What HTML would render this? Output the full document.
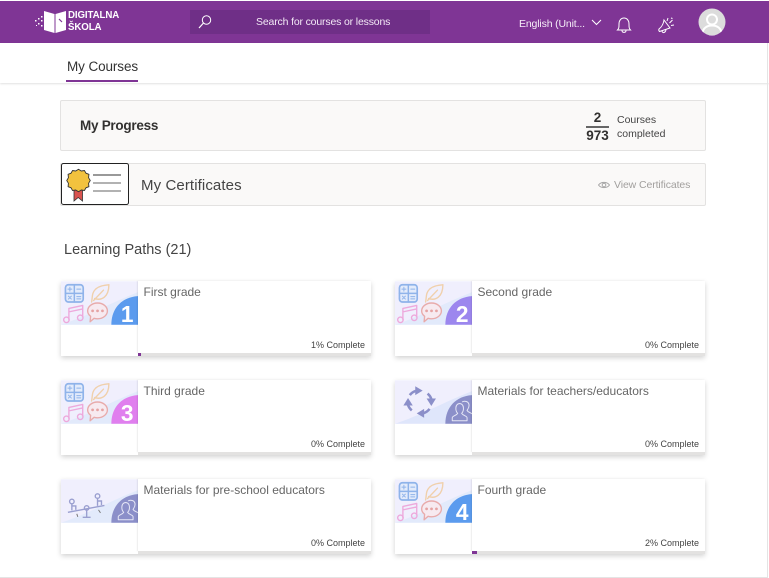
<!DOCTYPE html>
<html><head><meta charset="utf-8"><title>My Courses</title>
<style>
html,body{margin:0;padding:0;background:#fff}
body{position:relative;width:769px;height:578px;overflow:hidden;font-family:"Liberation Sans","DejaVu Sans",sans-serif;color:#333}
.a{position:absolute;white-space:nowrap}
.card{position:absolute;width:310px;height:75px;background:#fff;box-shadow:0 2px 5px rgba(0,0,0,.18)}
.card svg.th{position:absolute;left:0;top:0;width:77px;height:44px}
.r{position:absolute;left:77px;top:0;width:233px;height:72px;background:#fff;box-shadow:-1px 0 1px rgba(0,0,0,.08)}
.bar{position:absolute;left:77px;top:72px;width:233px;height:3px;background:#e3e2e1}
.bar i{position:absolute;left:0;top:0;height:3px;background:#7f3595;display:block}
.t{position:absolute;left:5.500px;top:4px;font-size:12px;color:#666;white-space:nowrap}
.c{position:absolute;right:6px;top:59px;font-size:9px;color:#444;white-space:nowrap}
.panel{position:absolute;left:60px;width:644px;background:#faf9f8;border:1px solid #e3e2e1;border-radius:2px}
.n{font-family:"Liberation Sans",sans-serif;font-weight:bold;font-size:23px;fill:#fff;text-anchor:middle}
</style></head><body>
<svg width="0" height="0" style="position:absolute">
<defs>
<symbol id="subj" viewBox="0 0 78 44">
<g fill="none" stroke-width="1.400" stroke-linecap="round" stroke-linejoin="round">
<rect x="4.500" y="3.500" width="18" height="17.500" rx="3" fill="#e3ebfb" stroke="#8fb3ea" stroke-width="1.700"/>
<path d="M13.500 3.500V21M4.500 12.200H22.500" stroke="#8fb3ea" stroke-width="1.500"/>
<path d="M7 8H11M9 6V10M16 8H20M7.500 15L10.500 18M10.500 15L7.500 18M16 15.500H20M16 17.800H20" stroke="#8fb3ea" stroke-width="1"/>
<path d="M31 21C32 16 31 12 35 8C39 4.500 44 4 48.500 3.500C48.500 8 47.500 13 44 16C41 18.500 37 18.500 34 17.500M33 19.500L43 9" stroke="#f0d0ac"/>
<path d="M8 39V27.500L22 24.500V36M8 31L22 28" stroke="#eda9dc"/>
<ellipse cx="5.500" cy="39" rx="2.800" ry="2.800" stroke="#eda9dc"/>
<ellipse cx="19.500" cy="37" rx="2.800" ry="2.800" stroke="#eda9dc"/>
<path d="M37 22C42.500 22 47 25.500 47 30C47 34.500 42.500 38 37 38C35.500 38 34.500 37.800 33.500 37.500L29.500 41L30 35.500C28 34 27 32.200 27 30C27 25.500 31.500 22 37 22Z" fill="#f7eaf0" stroke="#e8abab"/>
<circle cx="32" cy="30" r="1.400" fill="#e5a3a3" stroke="none"/><circle cx="37" cy="30" r="1.400" fill="#e5a3a3" stroke="none"/><circle cx="42" cy="30" r="1.400" fill="#e5a3a3" stroke="none"/>
</g>
</symbol>
<symbol id="people" viewBox="0 0 78 44">
<g fill="none" stroke="#e6e7f6" stroke-width="1" stroke-linejoin="round">
<path d="M58 41V38C58 36 62 36 63.500 33.500C61 31 60.500 24 65.500 23.500C70.500 24 70 31 67.500 33.500C69 36 73 36 73 38V41Z"/>
<path d="M68 22C70 20.500 75 21 75 25.500C75 28 73.500 29.500 73 30.500C74 32.500 77 33 78 34"/>
</g>
</symbol>
</defs>
</svg>

<!-- header -->
<div class="a" style="left:0;top:1px;width:769px;height:42px;background:#7f3595"></div>
<div class="a" style="left:0;top:43px;width:769px;height:40px;background:#fff;box-shadow:0 1px 2px rgba(0,0,0,.12)"></div>

<svg class="a" style="left:33px;top:9px" width="36" height="25" viewBox="0 0 36 25">
<g fill="#fff"><path d="M11 2L21.500 5V24L11 21Z"/><path d="M22.500 5L33 2V21L22.500 24Z"/>
<rect x="2" y="11" width="1.500" height="1.500"/><rect x="5" y="9" width="1.500" height="1.500"/><rect x="5" y="14" width="1.500" height="1.500"/><rect x="8" y="7" width="1.500" height="1.500"/><rect x="8" y="11" width="1.500" height="1.500"/><rect x="8" y="16" width="1.500" height="1.500"/><rect x="3" y="16" width="1" height="1"/></g>
<path d="M26 10L29 13" stroke="#7f3595" stroke-width="1.200"/>
</svg>
<div class="a" style="left:68px;top:10px;font-size:9.700px;line-height:11.500px;font-weight:bold;color:#fff;letter-spacing:-.1px">DIGITALNA<br>ŠKOLA</div>

<div class="a" style="left:190px;top:10px;width:240px;height:24px;background:#6f2f87"></div>
<svg class="a" style="left:197px;top:14px" width="16" height="16" viewBox="0 0 16 16"><circle cx="9.500" cy="6" r="4.200" fill="none" stroke="#fff" stroke-width="1"/><path d="M6.500 9L2 14" stroke="#fff" stroke-width="1.200"/></svg>
<div class="a" style="left:256px;top:16px;font-size:10.500px;color:#f3e9f6;letter-spacing:-.16px">Search for courses or lessons</div>

<div class="a" style="left:519px;top:18px;font-size:10.500px;color:#f6eef8;letter-spacing:-.15px">English (Unit...</div>
<svg class="a" style="left:590px;top:18px" width="12" height="10" viewBox="0 0 12 10"><path d="M2 2L6.500 6.500L11 2" fill="none" stroke="#fff" stroke-width="1"/></svg>
<svg class="a" style="left:615px;top:16px" width="18" height="18" viewBox="0 0 18 18"><path d="M2.500 14C4 12.500 4 11 4 8C4 4.500 6 2 9 2C12 2 14 4.500 14 8C14 11 14 12.500 15.500 14ZM7 14.500C7 17 11 17 11 14.500" fill="none" stroke="#fff" stroke-width="1"/></svg>
<svg class="a" style="left:657px;top:16px" width="20" height="19" viewBox="0 0 20 19"><path d="M7 4L13 12L2.500 15.500C1.500 14.500 1.500 14 2 13C4.500 11 6.500 8 7 4ZM5 15C5.500 17.500 8.500 17 9 13.500M10 5L11 2M12.500 7L15.500 4M14 9.500L17 9M14 2L15.500 2.500" fill="none" stroke="#fff" stroke-width="1"/></svg>
<svg class="a" style="left:698px;top:8px" width="28" height="28" viewBox="0 0 28 28"><defs><clipPath id="av"><circle cx="14" cy="14" r="13.500"/></clipPath></defs><circle cx="14" cy="14" r="13.500" fill="#dcdcdc"/><g clip-path="url(#av)"><circle cx="14" cy="11.500" r="5" fill="none" stroke="#fff" stroke-width="2"/><path d="M4.500 25C5 20 9 17.500 14 17.500C19 17.500 23 20 23.500 25L22 28H6Z" fill="none" stroke="#fff" stroke-width="2"/></g></svg>

<!-- tab -->
<div class="a" style="left:67px;top:58.500px;font-size:13.500px;color:#333;letter-spacing:-.1px">My Courses</div>
<div class="a" style="left:66px;top:80px;width:72px;height:2px;background:#7f3595"></div>

<!-- progress -->
<div class="panel" style="top:100px;height:49px"></div>
<div class="a" style="left:80px;top:118px;font-size:13.500px;font-weight:bold;color:#323130;letter-spacing:-.27px">My Progress</div>
<div class="a" style="left:586px;top:110px;width:23px;text-align:center;font-size:13.500px;font-weight:bold;color:#323130">2</div>
<div class="a" style="left:586px;top:126px;width:23px;height:1.500px;background:#666"></div>
<div class="a" style="left:586px;top:128px;width:23px;text-align:center;font-size:13.500px;font-weight:bold;color:#323130">973</div>
<div class="a" style="left:617px;top:112.500px;font-size:10.500px;line-height:14.500px;color:#444">Courses<br>completed</div>

<!-- certificates -->
<div class="panel" style="top:163px;height:41px"></div>
<svg class="a" style="left:61px;top:163px" width="68" height="42" viewBox="0 0 68 42">
<rect x=".5" y=".5" width="67" height="41" rx="2" fill="#fff" stroke="#222"/>
<path d="M13 26H21.500V38L17.200 34.500L13 38Z" fill="#d9534f" stroke="#333" stroke-width=".8"/>
<g transform="translate(17.500 17.500) scale(1.120) translate(-17 -16.500)"><path d="M17 6.500L19.500 8L22.300 7.600L23.700 10L26.300 11L26 14L27.500 16.500L26 19L26.300 22L23.700 23L22.300 25.400L19.500 25L17 26.500L14.500 25L11.700 25.400L10.300 23L7.700 22L8 19L6.500 16.500L8 14L7.700 11L10.300 10L11.700 7.600L14.500 8Z" fill="#f2c23e" stroke="#333" stroke-width=".8"/></g>
<path d="M32 12H60" stroke="#333" stroke-width="1"/><path d="M32 20H60" stroke="#666" stroke-width="1"/><path d="M32 28H60" stroke="#666" stroke-width="1"/>
</svg>
<div class="a" style="left:141px;top:177px;font-size:15px;color:#444;letter-spacing:.1px">My Certificates</div>
<svg class="a" style="left:598px;top:180px" width="12" height="10" viewBox="0 0 12 10"><path d="M.5 5C3 1.500 9 1.500 11.500 5C9 8.500 3 8.500 .5 5Z" fill="none" stroke="#a6a6a6"/><circle cx="6" cy="5" r="1.800" fill="none" stroke="#a6a6a6"/></svg>
<div class="a" style="left:614px;top:179px;font-size:10.500px;color:#a19f9d;letter-spacing:-.1px">View Certificates</div>

<div class="a" style="left:64px;top:242px;font-size:14.500px;color:#444">Learning Paths (21)</div>

<!-- cards -->
<div class="card" style="left:61px;top:281px">
<svg class="th" viewBox="0 0 78 44"><rect width="78" height="44" fill="#f0effd"/><path d="M0 44C25 36 50 22 78 11V44Z" fill="#e2eafb"/><path d="M51 44C51 27 62 16 78 15V44Z" fill="#5b9bee"/><use href="#subj" width="78" height="44"/><text class="n" x="67" y="41">1</text></svg>
<div class="r"><div class="t">First grade</div><div class="c">1% Complete</div></div><div class="bar"><i style="width:3px"></i></div></div>

<div class="card" style="left:395px;top:281px">
<svg class="th" viewBox="0 0 78 44"><rect width="78" height="44" fill="#f0effd"/><path d="M0 44C25 36 50 22 78 11V44Z" fill="#e2eafb"/><path d="M51 44C51 27 62 16 78 15V44Z" fill="#9c87ee"/><use href="#subj" width="78" height="44"/><text class="n" x="68" y="41">2</text></svg>
<div class="r"><div class="t">Second grade</div><div class="c">0% Complete</div></div><div class="bar"></div></div>

<div class="card" style="left:61px;top:380px">
<svg class="th" viewBox="0 0 78 44"><rect width="78" height="44" fill="#f0effd"/><path d="M0 44C25 36 50 22 78 11V44Z" fill="#e2eafb"/><path d="M51 44C51 27 62 16 78 15V44Z" fill="#e07fee"/><use href="#subj" width="78" height="44"/><text class="n" x="67" y="41">3</text></svg>
<div class="r"><div class="t">Third grade</div><div class="c">0% Complete</div></div><div class="bar"></div></div>

<div class="card" style="left:395px;top:380px">
<svg class="th" viewBox="0 0 78 44"><rect width="78" height="44" fill="#f0effd"/><path d="M0 44C25 36 50 22 78 11V44Z" fill="#dfe6fb"/><path d="M51 44C51 27 62 16 78 15V44Z" fill="#8b8fc9"/><use href="#people" width="78" height="44"/>
<g fill="none" stroke="#8b8fc9" stroke-width="2.600"><path d="M15 15A12 12 0 0 1 21 10.800"/><path d="M33 13.500A12 12 0 0 1 36.800 19"/><path d="M35 29A12 12 0 0 1 29 33.300"/><path d="M17 30.500A12 12 0 0 1 13.200 25"/></g>
<g fill="#8b8fc9"><path d="M20.500 6L28 10.500L20.500 15Z"/><path d="M32 18.500H41.500L36.800 26Z"/><path d="M29.500 29V38L22 33.500Z"/><path d="M8.500 25.500H18L13.200 18Z"/></g></svg>
<div class="r"><div class="t">Materials for teachers/educators</div><div class="c">0% Complete</div></div><div class="bar"></div></div>

<div class="card" style="left:61px;top:479px">
<svg class="th" viewBox="0 0 78 44"><rect width="78" height="44" fill="#f0effd"/><path d="M0 44C25 36 50 22 78 11V44Z" fill="#e2eafb"/><path d="M51 44C51 27 62 16 78 15V44Z" fill="#8b8fc9"/><use href="#people" width="78" height="44"/>
<g fill="none" stroke="#9a9fd0" stroke-width="1.400"><path d="M7 33.500L44 26.500"/><circle cx="11" cy="22.500" r="2.300"/><circle cx="37" cy="17" r="2.300"/><circle cx="26" cy="29" r="2.300"/><path d="M11 25V31.500M11 27H15V31M37 19.500V27M37 22H41V26M26 31.500V38M22 38.500H30"/><path d="M16 35L17 38M38 31L40 34" stroke="#777" stroke-width="1"/></g></svg>
<div class="r"><div class="t">Materials for pre-school educators</div><div class="c">0% Complete</div></div><div class="bar"></div></div>

<div class="card" style="left:395px;top:479px">
<svg class="th" viewBox="0 0 78 44"><rect width="78" height="44" fill="#f0effd"/><path d="M0 44C25 36 50 22 78 11V44Z" fill="#e2eafb"/><path d="M51 44C51 27 62 16 78 15V44Z" fill="#5b9bee"/><use href="#subj" width="78" height="44"/><text class="n" x="68" y="41">4</text></svg>
<div class="r"><div class="t">Fourth grade</div><div class="c">2% Complete</div></div><div class="bar"><i style="width:5px"></i></div></div>

<!-- page edges -->
<div class="a" style="left:767px;top:43px;width:1px;height:535px;background:#e4e4e4"></div>
<div class="a" style="left:0;top:577px;width:768px;height:1px;background:#e4e4e4"></div>
</body></html>
